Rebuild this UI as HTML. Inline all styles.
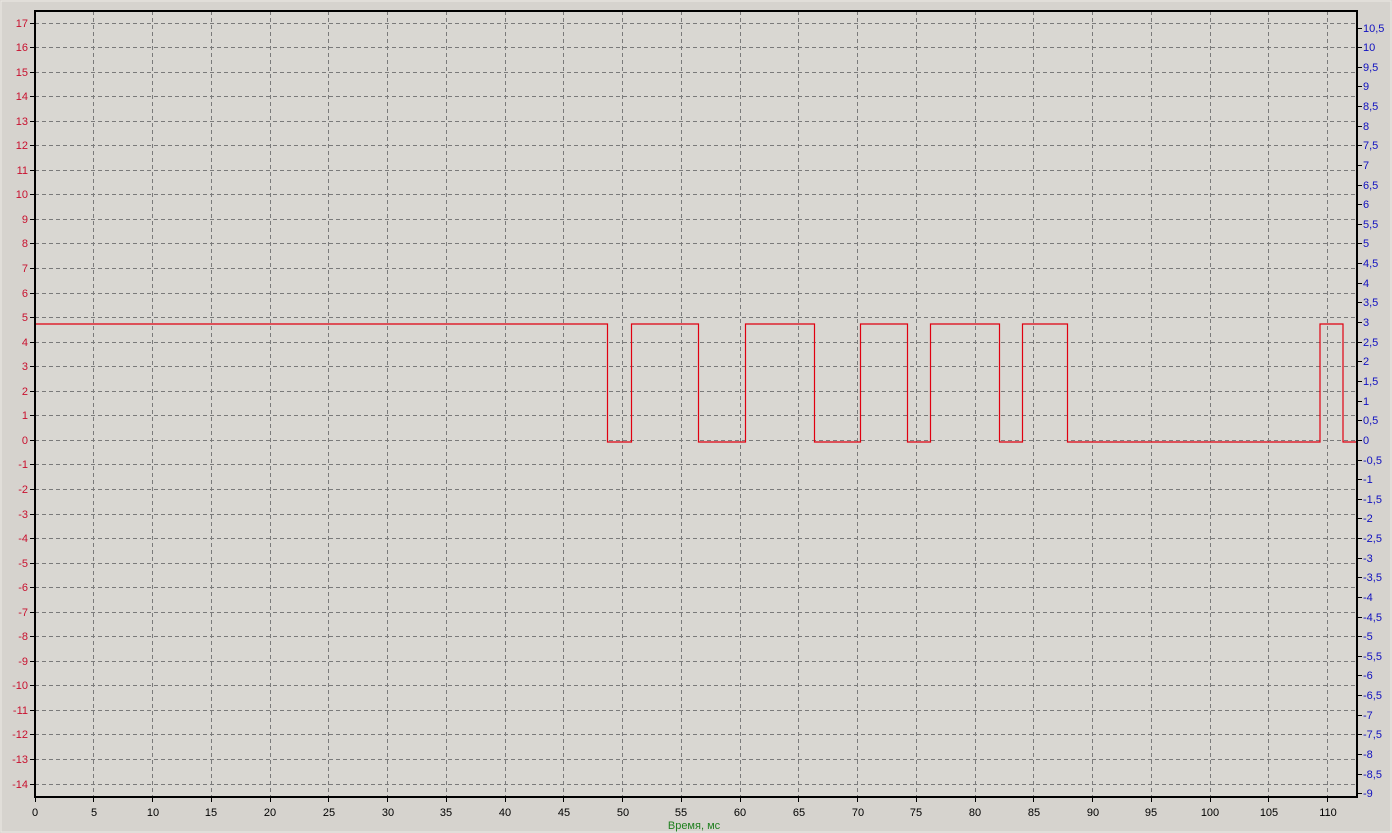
<!DOCTYPE html>
<html><head><meta charset="utf-8"><style>
html,body{margin:0;padding:0;background:#d6d3ce;}
svg{display:block;font-family:Tahoma,"Liberation Sans",sans-serif;font-size:11px;}
</style></head><body>
<svg width="1392" height="833" viewBox="0 0 1392 833" xmlns="http://www.w3.org/2000/svg">
<rect x="0" y="0" width="1392" height="833" fill="#d6d3ce"/>
<rect x="1" y="1" width="1390" height="831" fill="none" stroke="#ece9e4"/>
<rect x="35" y="11" width="1322" height="786" fill="#d9d7d2"/>
<g stroke="#7a7a7a" stroke-width="1" stroke-dasharray="4,3" fill="none">
<path d="M35 23.5H1357M35 47.5H1357M35 72.5H1357M35 96.5H1357M35 121.5H1357M35 145.5H1357M35 170.5H1357M35 194.5H1357M35 219.5H1357M35 243.5H1357M35 268.5H1357M35 293.5H1357M35 317.5H1357M35 342.5H1357M35 366.5H1357M35 391.5H1357M35 415.5H1357M35 440.5H1357M35 464.5H1357M35 489.5H1357M35 514.5H1357M35 538.5H1357M35 563.5H1357M35 587.5H1357M35 612.5H1357M35 636.5H1357M35 661.5H1357M35 685.5H1357M35 710.5H1357M35 734.5H1357M35 759.5H1357M35 784.5H1357"/>
<path d="M93.5 11V797M152.5 11V797M211.5 11V797M270.5 11V797M328.5 11V797M387.5 11V797M446.5 11V797M505.5 11V797M563.5 11V797M622.5 11V797M681.5 11V797M740.5 11V797M798.5 11V797M857.5 11V797M916.5 11V797M975.5 11V797M1033.5 11V797M1092.5 11V797M1151.5 11V797M1210.5 11V797M1268.5 11V797M1327.5 11V797"/>
</g>
<rect x="35" y="11" width="1322" height="786" fill="none" stroke="#000" stroke-width="2"/>
<g stroke="#000" stroke-width="1">
<path d="M30 23.5H35M30 47.5H35M30 72.5H35M30 96.5H35M30 121.5H35M30 145.5H35M30 170.5H35M30 194.5H35M30 219.5H35M30 243.5H35M30 268.5H35M30 293.5H35M30 317.5H35M30 342.5H35M30 366.5H35M30 391.5H35M30 415.5H35M30 440.5H35M30 464.5H35M30 489.5H35M30 514.5H35M30 538.5H35M30 563.5H35M30 587.5H35M30 612.5H35M30 636.5H35M30 661.5H35M30 685.5H35M30 710.5H35M30 734.5H35M30 759.5H35M30 784.5H35"/>
<path d="M1357 28.5h5M1357 47.5h5M1357 67.5h5M1357 86.5h5M1357 106.5h5M1357 126.5h5M1357 145.5h5M1357 165.5h5M1357 185.5h5M1357 204.5h5M1357 224.5h5M1357 243.5h5M1357 263.5h5M1357 283.5h5M1357 302.5h5M1357 322.5h5M1357 342.5h5M1357 361.5h5M1357 381.5h5M1357 401.5h5M1357 420.5h5M1357 440.5h5M1357 460.5h5M1357 479.5h5M1357 499.5h5M1357 518.5h5M1357 538.5h5M1357 558.5h5M1357 577.5h5M1357 597.5h5M1357 617.5h5M1357 636.5h5M1357 656.5h5M1357 675.5h5M1357 695.5h5M1357 715.5h5M1357 734.5h5M1357 754.5h5M1357 774.5h5M1357 793.5h5"/>
<path d="M35.5 797v5M93.5 797v5M152.5 797v5M211.5 797v5M270.5 797v5M328.5 797v5M387.5 797v5M446.5 797v5M505.5 797v5M563.5 797v5M622.5 797v5M681.5 797v5M740.5 797v5M798.5 797v5M857.5 797v5M916.5 797v5M975.5 797v5M1033.5 797v5M1092.5 797v5M1151.5 797v5M1210.5 797v5M1268.5 797v5M1327.5 797v5"/>
</g>
<g fill="#c8102e" text-anchor="end">
<text x="28" y="27">17</text><text x="28" y="51">16</text><text x="28" y="76">15</text><text x="28" y="100">14</text><text x="28" y="125">13</text><text x="28" y="149">12</text><text x="28" y="174">11</text><text x="28" y="198">10</text><text x="28" y="223">9</text><text x="28" y="247">8</text><text x="28" y="272">7</text><text x="28" y="297">6</text><text x="28" y="321">5</text><text x="28" y="346">4</text><text x="28" y="370">3</text><text x="28" y="395">2</text><text x="28" y="419">1</text><text x="28" y="444">0</text><text x="28" y="468">-1</text><text x="28" y="493">-2</text><text x="28" y="518">-3</text><text x="28" y="542">-4</text><text x="28" y="567">-5</text><text x="28" y="591">-6</text><text x="28" y="616">-7</text><text x="28" y="640">-8</text><text x="28" y="665">-9</text><text x="28" y="689">-10</text><text x="28" y="714">-11</text><text x="28" y="738">-12</text><text x="28" y="763">-13</text><text x="28" y="788">-14</text>
</g>
<g fill="#1010c0">
<text x="1363" y="32">10,5</text><text x="1363" y="51">10</text><text x="1363" y="71">9,5</text><text x="1363" y="90">9</text><text x="1363" y="110">8,5</text><text x="1363" y="130">8</text><text x="1363" y="149">7,5</text><text x="1363" y="169">7</text><text x="1363" y="189">6,5</text><text x="1363" y="208">6</text><text x="1363" y="228">5,5</text><text x="1363" y="247">5</text><text x="1363" y="267">4,5</text><text x="1363" y="287">4</text><text x="1363" y="306">3,5</text><text x="1363" y="326">3</text><text x="1363" y="346">2,5</text><text x="1363" y="365">2</text><text x="1363" y="385">1,5</text><text x="1363" y="405">1</text><text x="1363" y="424">0,5</text><text x="1363" y="444">0</text><text x="1363" y="464">-0,5</text><text x="1363" y="483">-1</text><text x="1363" y="503">-1,5</text><text x="1363" y="522">-2</text><text x="1363" y="542">-2,5</text><text x="1363" y="562">-3</text><text x="1363" y="581">-3,5</text><text x="1363" y="601">-4</text><text x="1363" y="621">-4,5</text><text x="1363" y="640">-5</text><text x="1363" y="660">-5,5</text><text x="1363" y="679">-6</text><text x="1363" y="699">-6,5</text><text x="1363" y="719">-7</text><text x="1363" y="738">-7,5</text><text x="1363" y="758">-8</text><text x="1363" y="778">-8,5</text><text x="1363" y="797">-9</text>
</g>
<g fill="#000" text-anchor="middle">
<text x="35" y="816">0</text><text x="94" y="816">5</text><text x="153" y="816">10</text><text x="211" y="816">15</text><text x="270" y="816">20</text><text x="329" y="816">25</text><text x="388" y="816">30</text><text x="446" y="816">35</text><text x="505" y="816">40</text><text x="564" y="816">45</text><text x="623" y="816">50</text><text x="681" y="816">55</text><text x="740" y="816">60</text><text x="799" y="816">65</text><text x="858" y="816">70</text><text x="916" y="816">75</text><text x="975" y="816">80</text><text x="1034" y="816">85</text><text x="1093" y="816">90</text><text x="1151" y="816">95</text><text x="1210" y="816">100</text><text x="1269" y="816">105</text><text x="1328" y="816">110</text>
</g>
<text x="694" y="829" fill="#208020" text-anchor="middle">Время, мс</text>
<path fill="none" stroke="#e00010" stroke-width="1.2" d="M36 324H607.5V442H631.5V324H698.5V442H745.5V324H814.5V442H860.5V324H907.5V442H930.5V324H999.5V442H1022.5V324H1067.5V442H1320V324H1343V442H1356"/>
</svg>
</body></html>
